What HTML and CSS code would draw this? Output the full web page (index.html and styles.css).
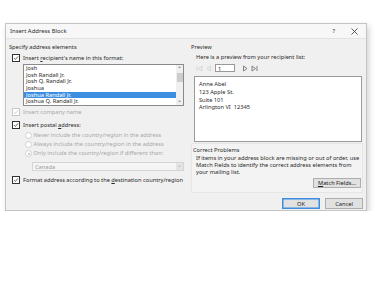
FILE: index.html
```html
<!DOCTYPE html>
<html lang="en">
<head>
    <meta charset="UTF-8" />
    <title>Insert Address Block</title>
    <link rel="stylesheet" href="styles.css">
</head>
<body>

<div class="dialog">
    <div class="titlebar">
        <span class="title">Insert Address Block</span>
        <span class="help">?</span>
        <svg class="close" width="7" height="7" viewBox="0 0 7 7"><path d="M0.5 0.5L6.5 6.5M6.5 0.5L0.5 6.5" stroke="#333" stroke-width="0.8"/></svg>
    </div>

    <div class="content">
        <div class="left">
            <div class="group-label">Specify address elements</div>

            <div class="check-row row-recipient">
                <span class="box checked"><svg viewBox="0 0 7 7"><path d="M1.2 3.6L2.8 5.2L5.9 1.6" fill="none" stroke="#222" stroke-width="0.8"/></svg></span>
                <span>Insert <u>r</u>ecipient's name in this format:</span>
            </div>

            <div class="listbox">
                <ul>
                    <li>Josh</li>
                    <li>Josh Randall Jr.</li>
                    <li>Josh Q. Randall Jr.</li>
                    <li>Joshua</li>
                    <li class="selected">Joshua Randall Jr.</li>
                    <li>Joshua Q. Randall Jr.</li>
                </ul>
                <div class="scrollbar">
                    <span class="arrow">&#8963;</span>
                    <span class="thumb"></span>
                    <span class="arrow down">&#8964;</span>
                </div>
            </div>

            <div class="check-row row-company disabled">
                <span class="box checked"><svg viewBox="0 0 7 7"><path d="M1.2 3.6L2.8 5.2L5.9 1.6" fill="none" stroke="#bbb" stroke-width="0.8"/></svg></span>
                <span>Insert company name</span>
            </div>

            <div class="check-row row-postal">
                <span class="box checked"><svg viewBox="0 0 7 7"><path d="M1.2 3.6L2.8 5.2L5.9 1.6" fill="none" stroke="#222" stroke-width="0.8"/></svg></span>
                <span>Insert postal <u>a</u>ddress:</span>
            </div>

            <div class="radio-row first disabled"><span class="radio"></span><span>Never include the country/region in the address</span></div>
            <div class="radio-row disabled"><span class="radio"></span><span>Always include the country/region in the address</span></div>
            <div class="radio-row disabled"><span class="radio on"></span><span>Only include the country/region if different than:</span></div>

            <div class="select">
                <span>Canada</span>
                <span class="select-btn">&#8964;</span>
            </div>

            <div class="check-row row-format">
                <span class="box checked"><svg viewBox="0 0 7 7"><path d="M1.2 3.6L2.8 5.2L5.9 1.6" fill="none" stroke="#222" stroke-width="0.8"/></svg></span>
                <span>Format address according to the <u>d</u>estination country/region</span>
            </div>
        </div>

        <div class="right">
            <div class="group-label">Preview</div>
            <div class="sub-label">Here is a preview from your recipient list:</div>

            <div class="nav">
                <svg class="nav-icon" width="7" height="7" viewBox="0 0 7 7"><path d="M1 1V6M6 1L2.5 3.5L6 6Z" fill="none" stroke="#ccc" stroke-width="0.7"/></svg>
                <svg class="nav-icon" width="7" height="7" viewBox="0 0 7 7"><path d="M5.5 1L2 3.5L5.5 6Z" fill="none" stroke="#ccc" stroke-width="0.7"/></svg>
                <span class="record">1</span>
                <svg class="nav-icon next" width="7" height="7" viewBox="0 0 7 7"><path d="M1.5 1L5 3.5L1.5 6Z" fill="none" stroke="#555" stroke-width="0.7"/></svg>
                <svg class="nav-icon" width="7" height="7" viewBox="0 0 7 7"><path d="M1 1L4.5 3.5L1 6ZM6 1V6" fill="none" stroke="#555" stroke-width="0.7"/></svg>
            </div>

            <div class="preview-box">
                <p>Anne Abel</p>
                <p>123 Apple St.</p>
                <p>Suite 101</p>
                <p>Arlington VI&nbsp;&nbsp;12345</p>
            </div>

            <div class="problems">
                <div class="group-label">Correct Problems</div>
                <p class="problems-text">If items in your address block are missing or out of order, use Match Fields to identify the correct address elements from your mailing list.</p>
                <div class="problems-actions">
                    <button class="btn match"><u>M</u>atch Fields...</button>
                </div>
            </div>

            <div class="footer">
                <button class="btn ok">OK</button>
                <button class="btn">Cancel</button>
            </div>
        </div>
    </div>
</div>

</body>
</html>
```

FILE: styles.css
```css
body {
    margin: 0;
    background-color: #ffffff;
    font-family: "Noto Sans", "Open Sans", sans-serif;
    font-size: 5.7px;
    color: #2a2a2a;
}
.dialog {
    margin: 23px 0 0 5px;
    width: 362px;
    height: 188px;
    box-sizing: border-box;
    background-color: #f0f0f0;
    border: 1px solid #c4c4c4;
    box-shadow: 2px 3px 6px rgba(0, 0, 0, 0.18);
}
.titlebar {
    height: 14px;
    display: flex;
    align-items: center;
    padding: 0 8px 0 4px;
    background-color: #f7f7f7;
    border-bottom: 1px solid #e2e2e2;
    font-size: 5.9px;
}
.title {
    flex: 1;
}
.help {
    margin-right: 16px;
    font-size: 6px;
}
.close {
    display: block;
}
.content {
    display: flex;
    padding: 0 2px 0 2px;
}
.left {
    width: 181px;
    display: flex;
    flex-direction: column;
}
.right {
    width: 174px;
    margin-left: 1px;
    display: flex;
    flex-direction: column;
}
.group-label {
    height: 8px;
    line-height: 8px;
    margin-top: 4px;
    padding-left: 1px;
}
.check-row {
    display: flex;
    align-items: center;
    height: 8px;
    line-height: 8px;
    padding-left: 4px;
    gap: 3px;
}
.box {
    width: 6px;
    height: 6px;
    border: 1px solid #333;
    background-color: #fff;
    display: block;
    flex-shrink: 0;
}
.box svg {
    display: block;
    width: 6px;
    height: 6px;
}
.disabled {
    color: #a8a8a8;
}
.disabled .box {
    border-color: #c8c8c8;
}
.row-recipient {
    margin-top: 3px;
}
.row-company {
    margin-top: 2px;
}
.row-postal {
    margin-top: 5px;
}
.row-format {
    margin-top: 5px;
}
.listbox {
    margin: 2px 0 0 15px;
    width: 161px;
    height: 42px;
    box-sizing: border-box;
    border: 1px solid #8a8a8a;
    background-color: #fff;
    display: flex;
}
.listbox ul {
    flex: 1;
    list-style: none;
    margin: 0;
    padding: 0;
}
.listbox li {
    height: 6.7px;
    line-height: 6.7px;
    padding-left: 2px;
}
.listbox li.selected {
    background-color: #3c8fe0;
    color: #fff;
}
.scrollbar {
    width: 7px;
    background-color: #f0f0f0;
    display: flex;
    flex-direction: column;
    align-items: center;
}
.arrow {
    height: 7px;
    line-height: 9px;
    font-size: 6px;
    color: #555;
}
.arrow.down {
    margin-top: auto;
    line-height: 4px;
}
.thumb {
    width: 6px;
    height: 9px;
    margin-top: 1px;
    background-color: #cdcdcd;
}
.radio-row {
    display: flex;
    align-items: center;
    height: 9px;
    line-height: 9px;
    padding-left: 17px;
    gap: 1.5px;
}
.radio-row.first {
    margin-top: 2px;
}
.radio {
    width: 5px;
    height: 5px;
    border: 1px solid #d0d0d0;
    border-radius: 50%;
    background-color: #fff;
    box-sizing: content-box;
    position: relative;
}
.radio.on::after {
    content: "";
    position: absolute;
    left: 1.5px;
    top: 1.5px;
    width: 2px;
    height: 2px;
    border-radius: 50%;
    background-color: #bbb;
}
.select {
    margin: 4px 0 0 24px;
    width: 152px;
    height: 9px;
    box-sizing: border-box;
    border: 1px solid #d4d4d4;
    background-color: #f5f5f5;
    color: #9a9a9a;
    display: flex;
    align-items: center;
    padding-left: 2px;
}
.select span:first-child {
    flex: 1;
}
.select-btn {
    width: 7px;
    height: 7px;
    line-height: 5px;
    text-align: center;
    background-color: #e4e4e4;
    color: #aaa;
}
.sub-label {
    height: 8px;
    line-height: 8px;
    margin-top: 2px;
    padding-left: 6px;
}
.nav {
    display: flex;
    align-items: center;
    height: 8px;
    margin-top: 3px;
    padding-left: 6px;
    gap: 2px;
}
.record {
    width: 20px;
    height: 8px;
    line-height: 8px;
    box-sizing: border-box;
    border: 1px solid #999;
    background-color: #fff;
    padding-left: 2px;
    margin-left: 1px;
}
.nav-icon.next {
    margin-left: 5px;
}
.preview-box {
    margin: 4px 0 0 4px;
    width: 168px;
    height: 66px;
    box-sizing: border-box;
    border: 1px solid #9a9a9a;
    background-color: #fff;
    padding: 4px 0 0 4px;
}
.preview-box p {
    margin: 0;
    height: 7.8px;
    line-height: 7.8px;
}
.problems {
    margin: 1px 0 0 1px;
    width: 172px;
    height: 50px;
    box-sizing: border-box;
    border: 1px solid #e6e6e6;
    background-color: #f3f3f3;
}
.problems .group-label {
    margin-top: 2px;
    padding-left: 1px;
}
.problems-text {
    margin: 1px 0 0 4px;
    width: 166px;
    line-height: 7px;
}
.problems-actions {
    display: flex;
    justify-content: flex-end;
    padding-right: 1px;
    margin-top: 2px;
}
.btn {
    font-family: inherit;
    font-size: 5.7px;
    color: #222;
    height: 10px;
    padding: 0;
    border: 1px solid #adadad;
    background-color: #e1e1e1;
}
.match {
    width: 48px;
}
.footer {
    display: flex;
    justify-content: flex-end;
    gap: 5px;
    margin-top: 5px;
    padding-right: 1px;
}
.footer .btn {
    width: 38px;
    height: 11px;
}
.ok {
    border-color: #3b8de0;
    box-shadow: inset 0 0 0 0.5px #3b8de0;
}
```
